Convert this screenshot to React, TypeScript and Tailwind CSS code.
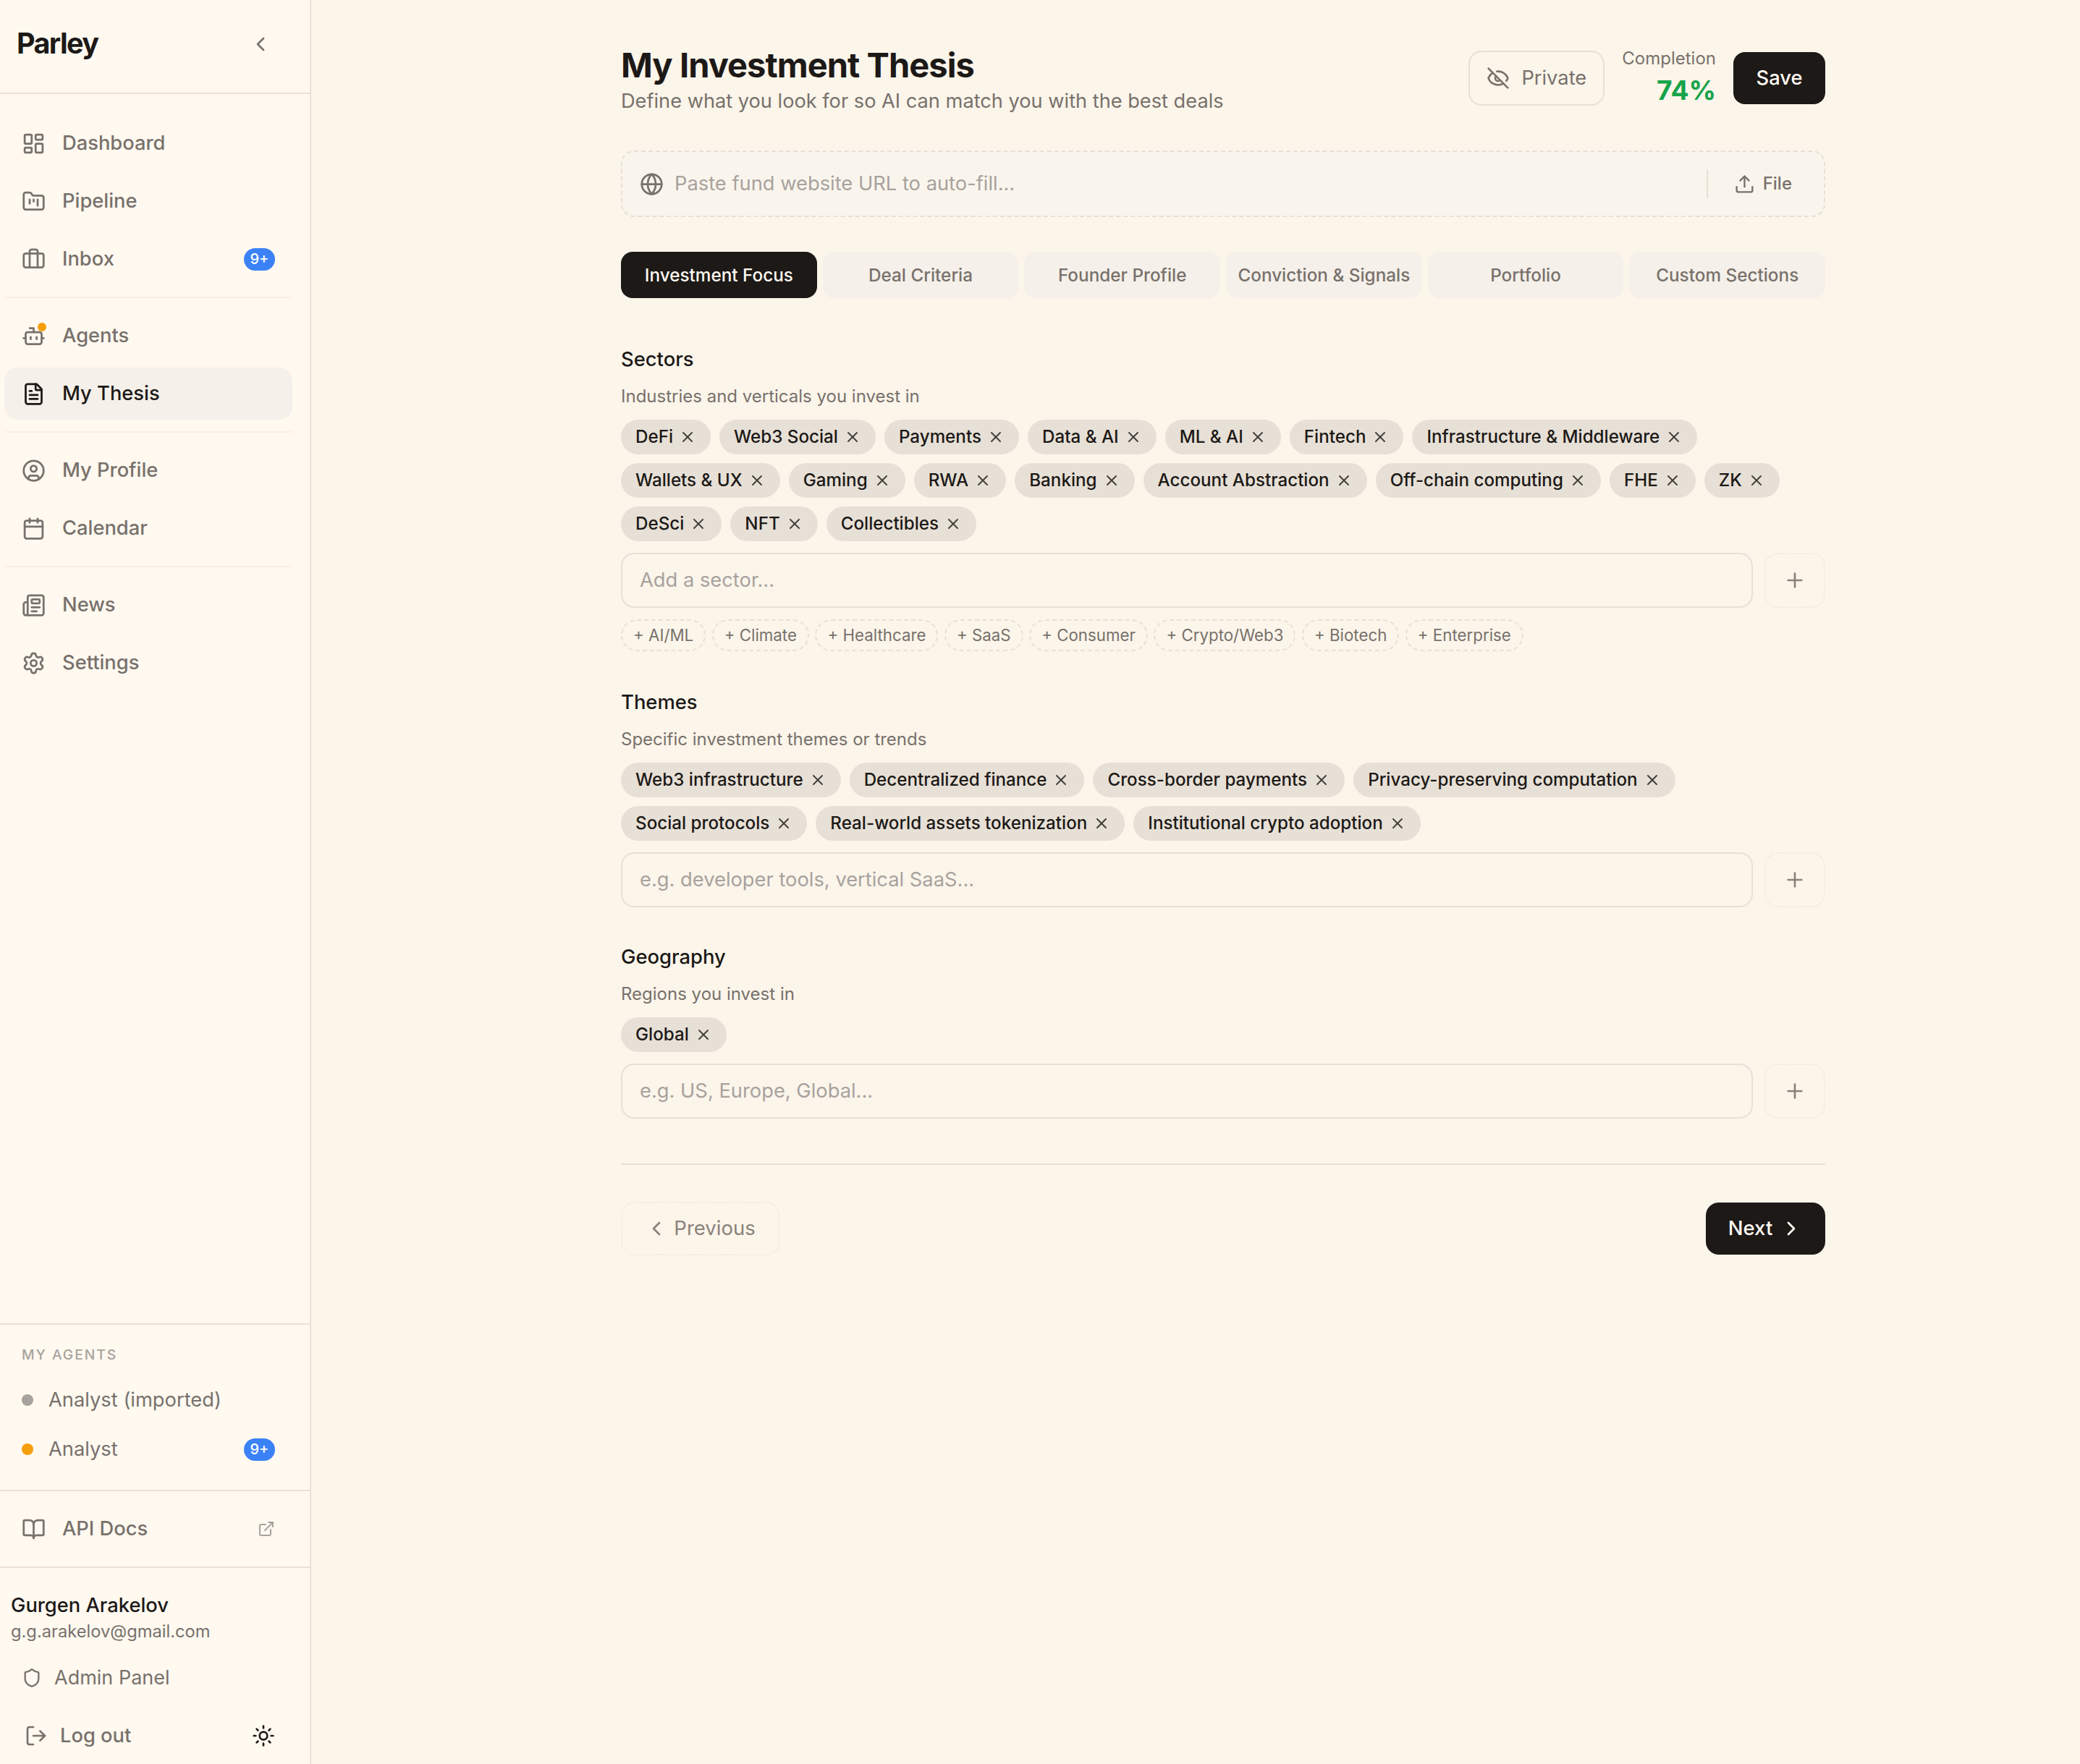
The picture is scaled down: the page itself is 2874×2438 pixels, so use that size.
import {
  LayoutDashboard, FolderKanban, Briefcase, Bot, FileText, CircleUser, Calendar, Newspaper, Settings,
  BookOpen, ExternalLink, Shield, LogOut, Sun, Globe, Upload, EyeOff, X, Plus, ChevronLeft, ChevronRight,
} from 'lucide-react'

const SECTORS = ['DeFi', 'Web3 Social', 'Payments', 'Data & AI', 'ML & AI', 'Fintech', 'Infrastructure & Middleware', 'Wallets & UX', 'Gaming', 'RWA', 'Banking', 'Account Abstraction', 'Off-chain computing', 'FHE', 'ZK', 'DeSci', 'NFT', 'Collectibles']
const SUGGESTIONS = ['AI/ML', 'Climate', 'Healthcare', 'SaaS', 'Consumer', 'Crypto/Web3', 'Biotech', 'Enterprise']
const THEMES = ['Web3 infrastructure', 'Decentralized finance', 'Cross-border payments', 'Privacy-preserving computation', 'Social protocols', 'Real-world assets tokenization', 'Institutional crypto adoption']
const TABS = ['Investment Focus', 'Deal Criteria', 'Founder Profile', 'Conviction & Signals', 'Portfolio', 'Custom Sections']

function Badge() {
  return <span className="ml-auto flex h-[31px] w-[43px] items-center justify-center rounded-full bg-[#3b82f6] text-[20px] font-medium text-white">9+</span>
}

function NavItem({ icon: Icon, label, active, badge, dot }: { icon: any; label: string; active?: boolean; badge?: boolean; dot?: boolean }) {
  return (
    <div className={`flex h-[72px] items-center gap-[23px] rounded-[18px] pl-[24px] pr-[24px] text-[27.3px] font-medium ${active ? 'bg-[#f5f0e9] text-[#1c1917]' : 'text-[#78716c]'}`}>
      <span className="relative shrink-0">
        <Icon size={33} strokeWidth={2} />
        {dot && <span className="absolute right-[-1px] top-[-2px] h-[12px] w-[12px] rounded-full bg-[#f59e0b]" />}
      </span>
      {label}
      {badge && <Badge />}
    </div>
  )
}

function Tag({ label }: { label: string }) {
  return (
    <span className="flex h-[48px] items-center gap-[8px] rounded-full bg-[#e7e0d6] px-[20px] text-[24.2px] font-medium text-[#1c1917]">
      {label}
      <X size={24} strokeWidth={2} className="text-[#44403c]" />
    </span>
  )
}

function AddRow({ placeholder }: { placeholder: string }) {
  return (
    <div className="flex gap-[16px]">
      <div className="flex h-[76px] flex-1 items-center rounded-[18px] border-2 border-[#e7e0d6] px-[24px] text-[27.3px] text-[#a8a29e]">{placeholder}</div>
      <div className="flex h-[76px] w-[84px] items-center justify-center rounded-[18px] border-2 border-dotted border-[#efe9de] text-[#8a827b]">
        <Plus size={32} strokeWidth={2} />
      </div>
    </div>
  )
}

function Field({ title, desc, tags, placeholder, className, children }: { title: string; desc: string; tags: string[]; placeholder: string; className?: string; children?: any }) {
  return (
    <section className={className}>
      <h3 className="text-[27.4px] font-medium leading-[36px] text-[#1c1917]">{title}</h3>
      <p className="mt-[18px] text-[24px] leading-[32px] text-[#78716c]">{desc}</p>
      <div className="mt-[16px] flex flex-wrap gap-[12px]">
        {tags.map(t => <Tag key={t} label={t} />)}
      </div>
      <div className="mt-[16px]"><AddRow placeholder={placeholder} /></div>
      {children}
    </section>
  )
}

export default function App() {
  return (
    <div className="flex h-[2438px] bg-[#fbf5ea] font-['Inter',sans-serif] antialiased">
      {/* Sidebar */}
      <aside className="flex w-[430px] shrink-0 flex-col border-r-2 border-[#e9e2d8] bg-[#fff9f0]">
        <div className="flex h-[130px] shrink-0 items-center justify-between border-b-2 border-[#e9e2d8] pb-[6px] pl-[23px] pr-[52px]">
          <span className="text-[39.5px] font-bold tracking-[-0.04em] text-[#1c1917]">Parley</span>
          <ChevronLeft size={32} strokeWidth={2} className="text-[#78716c]" />
        </div>
        <nav className="flex-1 px-[6px] pt-[32px] pr-[24px]">
          <div className="flex flex-col gap-[8px]">
            <NavItem icon={LayoutDashboard} label="Dashboard" />
            <NavItem icon={FolderKanban} label="Pipeline" />
            <NavItem icon={Briefcase} label="Inbox" badge />
          </div>
          <div className="my-[16px] h-[2px] bg-[#f5f0e9]" />
          <div className="flex flex-col gap-[8px]">
            <NavItem icon={Bot} label="Agents" dot />
            <NavItem icon={FileText} label="My Thesis" active />
          </div>
          <div className="my-[16px] h-[2px] bg-[#f5f0e9]" />
          <div className="flex flex-col gap-[8px]">
            <NavItem icon={CircleUser} label="My Profile" />
            <NavItem icon={Calendar} label="Calendar" />
          </div>
          <div className="my-[16px] h-[2px] bg-[#f5f0e9]" />
          <div className="flex flex-col gap-[8px]">
            <NavItem icon={Newspaper} label="News" />
            <NavItem icon={Settings} label="Settings" />
          </div>
        </nav>
        <div className="h-[230px] border-t-2 border-[#e9e2d8] pl-[30px] pr-[48px] pt-[28px]">
          <div className="text-[19.3px] font-medium leading-[26px] tracking-[0.1em] text-[#a8a29e]">MY AGENTS</div>
          <div className="mt-[16px] flex h-[68px] items-center gap-[21px] text-[27.3px] text-[#78716c]">
            <span className="h-[16px] w-[16px] rounded-full bg-[#a8a29e]" />Analyst (imported)
          </div>
          <div className="flex h-[68px] items-center gap-[21px] text-[27.3px] text-[#78716c]">
            <span className="h-[16px] w-[16px] rounded-full bg-[#f59e0b]" />Analyst
            <Badge />
          </div>
        </div>
        <div className="flex h-[106px] items-center gap-[23px] border-t-2 border-[#e9e2d8] pl-[30px] pr-[48px] text-[27.3px] font-medium text-[#78716c]">
          <BookOpen size={33} strokeWidth={2} />
          API Docs
          <ExternalLink size={24} strokeWidth={2} className="ml-auto text-[#a8a29e]" />
        </div>
        <div className="h-[273px] border-t-2 border-[#e9e2d8] pl-[15px] pr-[48px] pt-[33px]">
          <div className="text-[27.3px] font-medium leading-[38px] text-[#1c1917]">Gurgen Arakelov</div>
          <div className="text-[23.7px] leading-[34px] text-[#78716c]">g.g.arakelov@gmail.com</div>
          <div className="mt-[24px] flex h-[46px] items-center gap-[17px] pl-[15px] text-[27px] text-[#78716c]">
            <Shield size={28} strokeWidth={2} />Admin Panel
          </div>
          <div className="mt-[34px] flex h-[46px] items-center gap-[17px] pl-[19px] text-[27.3px] font-medium text-[#78716c]">
            <LogOut size={32} strokeWidth={2} />Log out
            <Sun size={32} strokeWidth={2} className="ml-auto text-[#1c1917]" />
          </div>
        </div>
      </aside>

      {/* Main */}
      <main className="min-w-0 flex-1 pl-[428px] pr-[352px] pt-[60px]">
        <header className="flex items-start justify-between">
          <div>
            <h1 className="text-[47px] font-bold leading-[60px] tracking-[-0.02em] text-[#1c1917]">My Investment Thesis</h1>
            <p className="text-[27.2px] leading-[40px] text-[#78716c]">Define what you look for so AI can match you with the best deals</p>
          </div>
          <div className="flex h-[96px] items-center gap-[24px]">
            <div className="flex h-[76px] w-[188px] items-center justify-center gap-[16px] rounded-[18px] border-2 border-[#e7e0d6] text-[27.3px] text-[#78716c]">
              <EyeOff size={32} strokeWidth={2} />Private
            </div>
            <div className="text-right">
              <div className="text-[24px] leading-[34px] text-[#78716c]">Completion</div>
              <div className="text-[37px] font-bold leading-[54px] text-[#16a34a]">74%</div>
            </div>
            <button className="flex h-[72px] w-[127px] items-center justify-center rounded-[16px] bg-[#1c1917] text-[27.3px] font-medium text-[#fff9f0]">Save</button>
          </div>
        </header>

        <div className="mt-[48px] flex h-[92px] items-center rounded-[18px] border-2 border-dashed border-[#e7e0d6] bg-[#faf5ec] pl-[24px] pr-[44px]">
          <Globe size={33} strokeWidth={2} className="text-[#78716c]" />
          <span className="ml-[15px] flex-1 text-[27.3px] text-[#a8a29e]">Paste fund website URL to auto-fill...</span>
          <span className="h-[40px] w-[2px] bg-[#e7e0d6]" />
          <span className="ml-[36px] flex items-center gap-[11px] text-[24px] font-medium text-[#78716c]">
            <Upload size={29} strokeWidth={2} />File
          </span>
        </div>

        <div className="mt-[48px] flex gap-[8px]">
          {TABS.map((t, i) => (
            <div key={t} className={`flex h-[64px] flex-1 items-center justify-center rounded-[16px] text-[24.3px] font-medium ${i === 0 ? 'bg-[#1c1917] text-[#fff9f0]' : 'bg-[#f5f0e9] text-[#78716c]'}`}>{t}</div>
          ))}
        </div>

        <div className="mt-[66px]">
          <Field title="Sectors" desc="Industries and verticals you invest in" tags={SECTORS} placeholder="Add a sector...">
            <div className="mt-[16px] flex gap-[8.5px]">
              {SUGGESTIONS.map(s => (
                <span key={s} className="flex h-[44px] items-center rounded-full border-2 border-dashed border-[#e7e0d6] px-[15px] text-[22.3px] text-[#78716c]">+ {s}</span>
              ))}
            </div>
          </Field>
          <Field className="mt-[52px]" title="Themes" desc="Specific investment themes or trends" tags={THEMES} placeholder="e.g. developer tools, vertical SaaS..." />
          <Field className="mt-[50px]" title="Geography" desc="Regions you invest in" tags={['Global']} placeholder="e.g. US, Europe, Global..." />
        </div>

        <div className="mt-[62px] flex items-center justify-between border-t-2 border-[#e7e0d6] pt-[51px]">
          <button className="flex h-[74px] w-[219px] items-center justify-center gap-[8px] rounded-[18px] border-2 border-dotted border-[#efe9de] text-[27.5px] text-[#8a827b]">
            <ChevronLeft size={32} strokeWidth={2} />Previous
          </button>
          <button className="flex h-[72px] w-[165px] items-center justify-center gap-[10px] rounded-[18px] bg-[#1c1917] text-[27.5px] font-medium text-[#fff9f0]">
            Next<ChevronRight size={32} strokeWidth={2} />
          </button>
        </div>
      </main>
    </div>
  )
}
